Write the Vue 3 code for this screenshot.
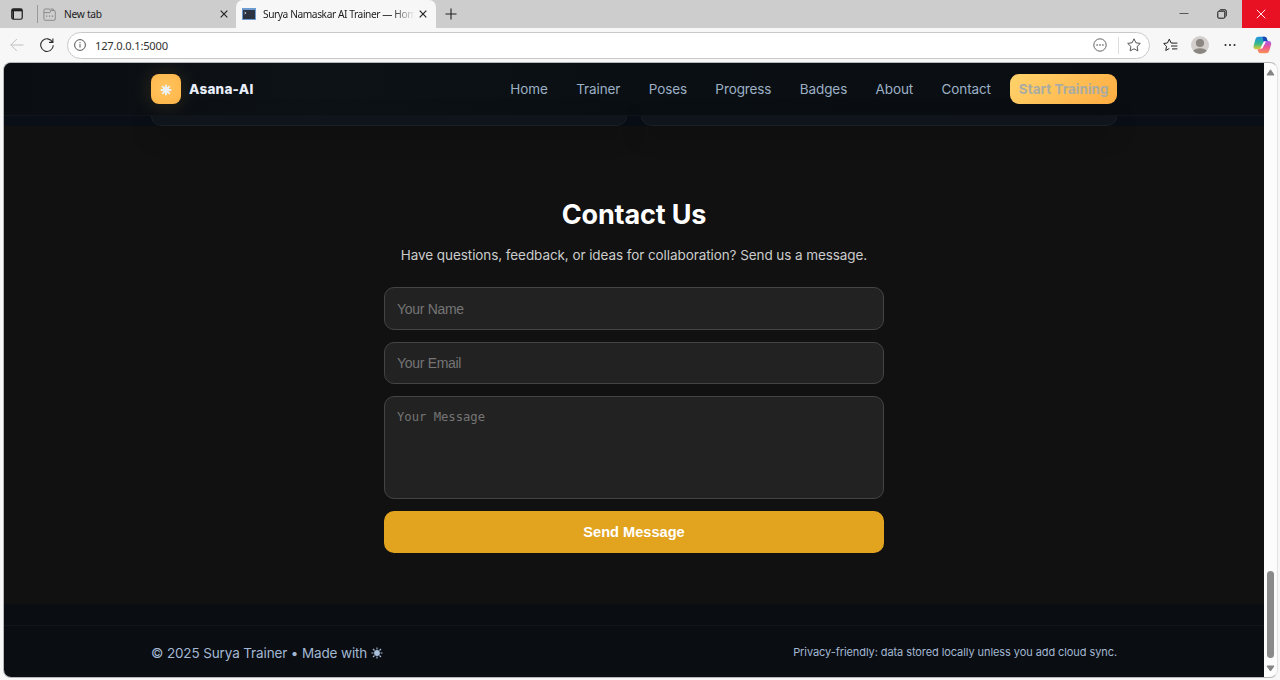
<template>
  <div class="browser">
    <!-- Tabs -->
    <div class="tabbar">
      <div class="tab-actions">
        <svg width="12" height="12" viewBox="0 0 12 12">
          <rect x="0.75" y="0.75" width="10.5" height="10.5" rx="1.8" fill="none" stroke="#1b1b1b" stroke-width="1.2" />
          <path d="M1 2.2h10" stroke="#1b1b1b" stroke-width="2.2" />
          <path d="M2.2 2v9" stroke="#1b1b1b" stroke-width="1.6" />
        </svg>
      </div>
      <div class="tab">
        <svg class="tab-icon" width="13" height="13" viewBox="0 0 13 13" fill="none" stroke="#858585" stroke-width=".9">
          <path d="M2.5 1h4l1.2 1.5H11A1.3 1.3 0 0 1 12.3 3.8V11a1.3 1.3 0 0 1-1.3 1.3H2.2A1.3 1.3 0 0 1 .9 11V2.5A1.4 1.4 0 0 1 2.5 1zM1 4.6h6l.8-2M7.6 1h2.6l1 1.4" />
          <path d="M3 8.2h1.3M5.9 8.2h1.3M8.8 8.2h1.3" stroke-width="1.3" />
        </svg>
        <span class="tab-title first">New tab</span>
        <svg class="close" width="8" height="8" viewBox="0 0 8 8"><path d="M.7.7l6.6 6.6M7.3.7L.7 7.3" stroke="#222" stroke-width="1.2" /></svg>
      </div>
      <div class="tab active">
        <svg class="tab-icon" width="14" height="12" viewBox="0 0 14 12">
          <rect width="14" height="12" fill="#6c9bd2" />
          <rect x="1" y="2" width="12" height="9" fill="#2b3340" />
          <path d="M2.5 4l1.6 1-1.6 1" stroke="#dfe7ef" fill="none" stroke-width=".8" />
        </svg>
        <span class="tab-title">Surya Namaskar AI Trainer — Hom</span>
        <svg class="close" width="8" height="8" viewBox="0 0 8 8"><path d="M.7.7l6.6 6.6M7.3.7L.7 7.3" stroke="#222" stroke-width="1.2" /></svg>
      </div>
      <svg class="plus" width="12" height="12" viewBox="0 0 12 12"><path d="M6 .5v11M.5 6h11" stroke="#222" stroke-width="1.1" /></svg>
      <div class="window-buttons">
        <div class="win"><svg width="10" height="10" viewBox="0 0 10 10"><path d="M.5 4.5h9" stroke="#555" /></svg></div>
        <div class="win">
          <svg width="10" height="10" viewBox="0 0 10 10" fill="none" stroke="#111" stroke-width="1">
            <rect x=".8" y="2.2" width="7" height="7" rx="1" />
            <path d="M2.6 1.4Q2.8.8 3.5.8H8q1.2 0 1.2 1.2v4.6q0 .8-.6 1" />
          </svg>
        </div>
        <div class="win red"><svg width="10" height="10" viewBox="0 0 10 10"><path d="M.8.8l8.4 8.4M9.2.8L.8 9.2" stroke="#fff" stroke-width=".9" /></svg></div>
      </div>
    </div>

    <!-- Address bar -->
    <div class="toolbar">
      <svg class="back" width="14" height="14" viewBox="0 0 14 14" fill="none" stroke="#c0c0c0"><path d="M13.5 7H.8M6.8 1L.8 7l6 6" /></svg>
      <svg class="reload" width="14" height="14" viewBox="0 0 14 14" fill="none" stroke="#2c2c2c" stroke-width="1.1">
        <path d="M12.6 4.2A6.3 6.3 0 1 0 13.3 7.3M12.9.4v4H9" />
      </svg>
      <div class="address">
        <svg width="12" height="12" viewBox="0 0 12 12" fill="none" stroke="#555">
          <circle cx="6" cy="6" r="5.4" /><path d="M6 5.2v3.3M6 3.2v1.1" />
        </svg>
        <span class="url">127.0.0.1:5000</span>
        <svg class="more" width="14" height="14" viewBox="0 0 14 14">
          <circle cx="7" cy="7" r="6.2" fill="none" stroke="#666" />
          <g fill="#444"><circle cx="4.1" cy="7" r=".8" /><circle cx="7" cy="7" r=".8" /><circle cx="9.9" cy="7" r=".8" /></g>
        </svg>
        <i class="divider"></i>
        <svg width="14" height="14" viewBox="0 0 14 14" fill="none" stroke="#555" stroke-linejoin="round">
          <path d="M7 .8l1.9 4 4.4.6-3.2 3.1.8 4.4L7 10.8l-3.9 2.1.8-4.4L.7 5.4l4.4-.6z" />
        </svg>
      </div>
      <svg class="favs" width="15" height="14" viewBox="0 0 15 14" fill="none" stroke="#222" stroke-linejoin="round">
        <path d="M9.2 5H8.1L6.3 1.1 4.5 4.9.7 5.5l2.8 2.8-.7 4.2 3.5-2M9 5.1h5.4M8 8h6.4M9 10.9h5.4" />
      </svg>
      <svg class="avatar" width="18" height="18" viewBox="0 0 18 18">
        <circle cx="9" cy="9" r="9" fill="#d2cfcc" />
        <circle cx="9" cy="7" r="4.1" fill="#8b8681" />
        <path d="M2.3 15q1.7-2.7 6.7-2.7t6.7 2.7A9 9 0 0 1 2.3 15z" fill="#8b8681" />
      </svg>
      <svg class="dots" width="12" height="4" viewBox="0 0 12 4" fill="#222"><circle cx="1.5" cy="2" r="1" /><circle cx="6" cy="2" r="1" /><circle cx="10.5" cy="2" r="1" /></svg>
      <svg class="copilot" width="19" height="18" viewBox="0 0 19 18">
        <defs>
          <linearGradient id="cpA" x1="0" y1="0" x2="0" y2="1"><stop offset="0" stop-color="#1f8fe8" /><stop offset=".55" stop-color="#36b98b" /><stop offset="1" stop-color="#e8c92e" /></linearGradient>
          <linearGradient id="cpB" x1="0" y1="0" x2="0" y2="1"><stop offset="0" stop-color="#a35be8" /><stop offset=".5" stop-color="#ec5794" /><stop offset="1" stop-color="#fb9251" /></linearGradient>
        </defs>
        <path d="M5.6.7h6.1q1.6 0 2.2 2l.7 2.2H12q-1.4 0-1.9 1.6L8.3 11.8q-.6 1.5-2 1.5H3.2Q.1 13.3.6 9.7L2.5 3Q3.2.7 5.6.7z" fill="url(#cpA)" />
        <path d="M9.6.7h2.1q1.6 0 2.2 2l.7 2.2H12q-1 0-1.5.7z" fill="#1746b5" />
        <path d="M13.4 17.3H7.3q-1.6 0-2.2-2l-.6-2h2.2q1.4 0 1.9-1.6l1.9-5.4q.5-1.4 2-1.4h3q3.1 0 2.6 3.5l-1.9 6.6q-.6 2.3-3 2.3z" fill="url(#cpB)" />
        <path d="M11 5.5h2L9.3 12.6h-2z" fill="#fff" />
      </svg>
    </div>

    <div class="viewport">
      <div class="page">
        <header class="header">
          <div class="brand">
            <div class="logo">
              <svg width="12" height="12" viewBox="0 0 12 12" stroke="#edf1f3" stroke-width="1.9" stroke-linecap="round">
                <circle cx="6" cy="6" r="3" fill="#edf1f3" stroke="none" />
                <path d="M6 1.4v9.2M1.4 6h9.2M2.7 2.7l6.6 6.6M9.3 2.7L2.7 9.3" />
              </svg>
            </div>
            <span class="brand-name">Asana-AI</span>
          </div>
          <nav class="nav">
            <a v-for="link in links" :key="link">{{ link }}</a>
            <a class="cta">Start Training</a>
          </nav>
        </header>

        <div class="cards">
          <div class="card"></div>
          <div class="card"></div>
        </div>

        <section class="contact">
          <h2>Contact Us</h2>
          <p>Have questions, feedback, or ideas for collaboration? Send us a message.</p>
          <form class="form" @submit.prevent="sendMessage">
            <input type="text" placeholder="Your Name" v-model="name">
            <input type="email" placeholder="Your Email" v-model="email">
            <textarea placeholder="Your Message" v-model="message"></textarea>
            <button type="submit">Send Message</button>
          </form>
        </section>

        <footer class="footer">
          <div class="footer-inner">
            <div class="made">
              <span>© 2025 Surya Trainer • Made with</span>
              <svg width="12" height="12" viewBox="0 0 12 12" stroke="#a9bfdb" stroke-width="1.1">
                <circle cx="6" cy="6" r="2.9" fill="#a9bfdb" stroke="none" />
                <path d="M6 .5v2M6 9.5v2M.5 6h2M9.5 6h2M2 2l1.5 1.5M8.5 8.5L10 10M10 2L8.5 3.5M3.5 8.5L2 10" />
              </svg>
            </div>
            <span class="privacy">Privacy-friendly: data stored locally unless you add cloud sync.</span>
          </div>
        </footer>
      </div>

      <div class="scrollbar">
        <svg width="9" height="7" viewBox="0 0 9 7"><path d="M4.5 .8L8 6H1z" fill="#858585" stroke="#858585" stroke-linejoin="round" /></svg>
        <div class="thumb"></div>
        <svg width="9" height="7" viewBox="0 0 9 7"><path d="M4.5 6L8 1H1z" fill="#858585" stroke="#858585" stroke-linejoin="round" /></svg>
      </div>
    </div>
  </div>
</template>

<script setup>
import { ref } from 'vue'

const links = ['Home', 'Trainer', 'Poses', 'Progress', 'Badges', 'About', 'Contact']

const name = ref('')
const email = ref('')
const message = ref('')

function sendMessage() {
  name.value = ''
  email.value = ''
  message.value = ''
}
</script>

<style>
body {
  margin: 0;
  overflow: hidden;
}
</style>

<style scoped>
* {
  box-sizing: border-box;
}

svg {
  display: block;
  flex: none;
}

.browser {
  width: 1280px;
  height: 680px;
  display: flex;
  flex-direction: column;
  background: #f7f7f7;
  font-family: "Noto Sans", sans-serif;
}

/* tabs */
.tabbar {
  height: 28px;
  display: flex;
  align-items: center;
  background: #cdcdcd;
}

.tab-actions {
  width: 38px;
  height: 18px;
  padding: 3px 0 0 11px;
  border-right: 1px solid #999;
}

.tab {
  width: 198px;
  height: 28px;
  display: flex;
  align-items: center;
  padding: 0 8px 0 5px;
}

.tab.active {
  width: 200px;
  padding: 0 9px 0 6px;
  background: #f7f7f7;
  border-radius: 7px 7px 0 0;
}

.tab-title {
  flex: 1;
  min-width: 0;
  margin: -1px 7px 0;
  white-space: nowrap;
  font-size: 10.2px;
  letter-spacing: -0.25px;
  color: #1c1c1c;
}

.tab-title.first {
  margin-left: 8px;
}

.active .tab-title {
  margin-right: 4px;
  letter-spacing: -0.42px;
  -webkit-mask-image: linear-gradient(90deg, #000 85%, transparent);
  mask-image: linear-gradient(90deg, #000 85%, transparent);
}

.plus {
  margin-left: 9px;
}

.window-buttons {
  margin-left: auto;
  display: flex;
}

.win {
  width: 38.5px;
  height: 28px;
  display: flex;
  align-items: center;
  justify-content: center;
}

.win.red {
  background: #e81123;
}

/* address bar */
.toolbar {
  height: 34px;
  display: flex;
  align-items: center;
}

.back {
  margin-left: 10px;
}

.reload {
  margin-left: 16px;
}

.address {
  width: 1083px;
  height: 27px;
  margin-left: 13px;
  display: flex;
  align-items: center;
  padding: 0 8px 0 6px;
  background: #fff;
  border: 1px solid #c9c9c9;
  border-radius: 14px;
}

.url {
  margin-left: 9px;
  font-size: 11.2px;
  letter-spacing: -0.22px;
  color: #333;
}

.more {
  margin-left: auto;
}

.divider {
  width: 1px;
  height: 17px;
  margin: 0 8px 0 11px;
  background: #ddd;
}

.favs {
  margin-left: 13px;
}

.avatar {
  margin-left: 13px;
}

.dots {
  margin-left: 15px;
}

.copilot {
  margin-left: 17px;
}

/* web page */
.viewport {
  width: 1275px;
  height: 616px;
  margin-left: 3px;
  display: flex;
  overflow: hidden;
  background: #fcfcfc;
  border: 1px solid #b5b7ba;
  border-right-color: #e2e2e2;
  border-radius: 8px;
}

.page {
  width: 1260px;
  height: 614px;
  background: #0a0d12;
  font-family: Inter, sans-serif;
}

.header {
  height: 53px;
  display: flex;
  align-items: center;
  justify-content: space-between;
  padding: 0 147px;
  background: linear-gradient(90deg, #0a0e12, #0d1217 25%, #0a0f13 50%, #0a0e12);
  border-bottom: 1px solid #10161c;
}

.brand {
  display: flex;
  align-items: center;
}

.logo {
  width: 30px;
  height: 30px;
  display: flex;
  align-items: center;
  justify-content: center;
  padding: 2px 1px 0 0;
  border-radius: 8px;
  background: radial-gradient(circle at 45% 45%, #ffc45f, #ffb547);
  box-shadow: 0 0 22px rgba(255, 185, 80, 0.16);
}

.brand-name {
  margin-left: 8px;
  font-size: 13.5px;
  font-weight: 800;
  letter-spacing: 0.25px;
  color: #e9effa;
}

.nav {
  display: flex;
  align-items: center;
  gap: 10.4px;
}

.nav a {
  padding: 0 9px;
  font-size: 13.5px;
  line-height: 30px;
  letter-spacing: -0.1px;
  color: #9cb0c6;
}

.nav .cta {
  height: 30px;
  padding: 0 8.5px;
  font-weight: 700;
  letter-spacing: 0;
  color: #a9aca3;
  border-radius: 9px;
  background: linear-gradient(135deg, #ffd36b, #ffad42);
}

.cards {
  height: 10px;
  display: flex;
  gap: 14px;
  padding: 0 147px;
  background: #0a0f17;
}

.card {
  flex: 1;
  background: #10141b;
  border: 1px solid #1a1e25;
  border-top: 0;
  border-radius: 0 0 14px 14px;
  box-shadow: 0 8px 24px rgba(0, 0, 0, 0.3);
}

.contact {
  height: 478px;
  padding-top: 72px;
  background: #111;
  text-align: center;
}

.contact h2 {
  margin: 0;
  font-size: 27px;
  line-height: 34px;
  font-weight: 700;
  letter-spacing: -0.15px;
  color: #fff;
}

.contact p {
  margin: 13px 0 0;
  font-size: 13.5px;
  line-height: 20px;
  letter-spacing: -0.08px;
  color: #ccc;
}

.form {
  width: 500px;
  margin: 22.4px auto 0;
  display: flex;
  flex-direction: column;
  gap: 12px;
}

.form input,
.form textarea {
  display: block;
  width: 100%;
  height: 42.3px;
  padding: 12px;
  border: 1px solid #444;
  border-radius: 10px;
  outline: 0;
  resize: none;
  background: #222;
  color: #fff;
  font-family: "Liberation Sans", Arial, sans-serif;
  font-size: 14px;
  letter-spacing: -0.3px;
}

.form textarea {
  height: 103px;
  padding-top: 13px;
  font-family: "DejaVu Sans Mono", monospace;
  font-size: 12.2px;
  letter-spacing: 0;
}

.form ::placeholder {
  color: #757575;
}

.form button {
  height: 42px;
  border: 0;
  border-radius: 10px;
  background: #e2a41f;
  color: #fff;
  font-family: "Liberation Sans", Arial, sans-serif;
  font-size: 14.6px;
  font-weight: 700;
}

.footer {
  padding-top: 21px;
}

.footer-inner {
  height: 52px;
  display: flex;
  align-items: center;
  justify-content: space-between;
  padding: 2px 147px 0;
  border-top: 1px solid #11161c;
  color: #a3b8d3;
}

.made {
  display: flex;
  align-items: center;
  gap: 4px;
  font-size: 13.5px;
  letter-spacing: -0.13px;
}

.privacy {
  margin-top: -2px;
  font-size: 11px;
  letter-spacing: -0.08px;
}

.scrollbar {
  width: 13px;
  height: 614px;
  display: flex;
  flex-direction: column;
  align-items: center;
  padding: 6px 0 5px;
}

.thumb {
  width: 7px;
  height: 87px;
  margin: auto 0 7px;
  border-radius: 4px;
  background: #8a8a8a;
}
</style>
